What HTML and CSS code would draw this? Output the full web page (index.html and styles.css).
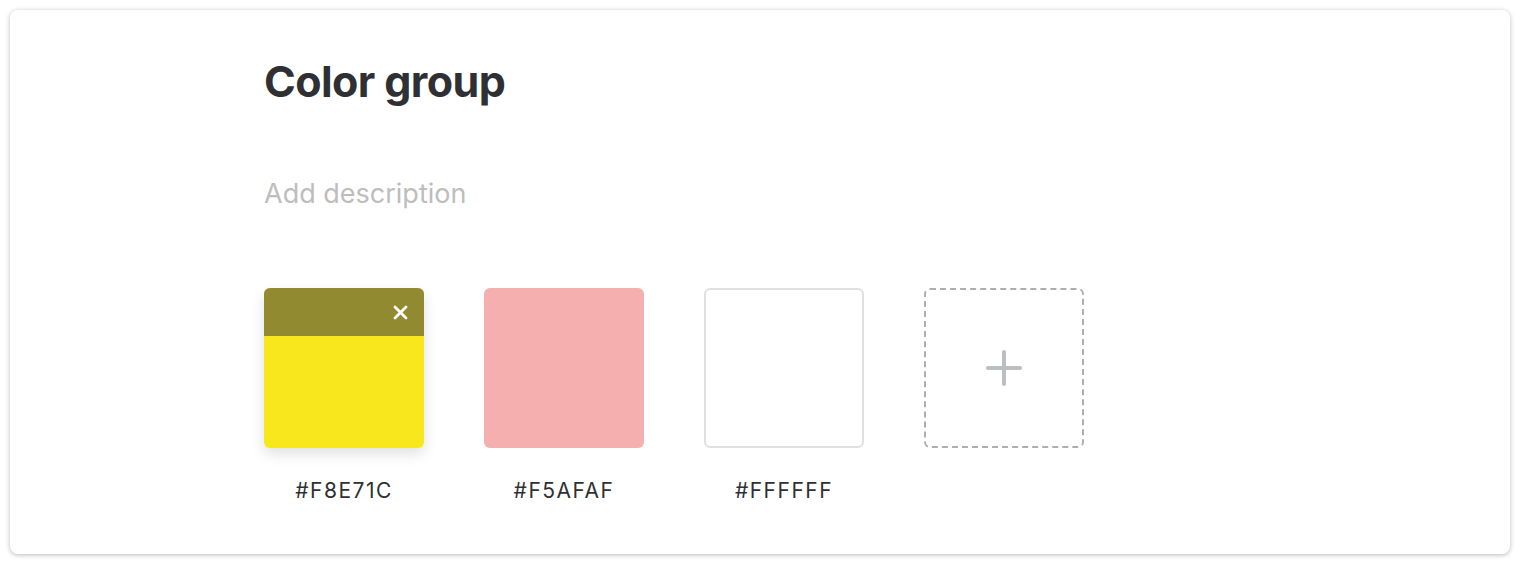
FILE: index.html
```
<!DOCTYPE html>
<html lang="en">
<head>
<meta charset="UTF-8" />
<meta name="viewport" content="width=device-width, initial-scale=1" />
<title>Color group</title>
<link rel="stylesheet" href="styles.css">
</head>
<body>
<div class="card">
  <h1 class="group-title">Color group</h1>
  <div class="group-desc">Add description</div>

  <div class="swatches">
    <div class="swatch">
      <div class="chip chip-active" style="background: #F8E71C;">
        <div class="chip-bar">
          <svg class="chip-close" width="15" height="15" viewBox="0 0 15 15">
            <path d="M2 2 L13 13 M13 2 L2 13" stroke="#fff" stroke-width="2.8" stroke-linecap="round" fill="none"/>
          </svg>
        </div>
      </div>
      <div class="swatch-label">#F8E71C</div>
    </div>
    <div class="swatch">
      <div class="chip" style="background: #F5AFAF;"></div>
      <div class="swatch-label">#F5AFAF</div>
    </div>
    <div class="swatch">
      <div class="chip chip-light" style="background: #FFFFFF;"></div>
      <div class="swatch-label">#FFFFFF</div>
    </div>
    <div class="swatch">
      <div class="chip chip-add">
        <svg width="36" height="36" viewBox="0 0 36 36">
          <path d="M18 2 V34 M2 18 H34" stroke="#bcbec2" stroke-width="4" stroke-linecap="round" fill="none"/>
        </svg>
      </div>
    </div>
  </div>
</div>
</body>
</html>
```

FILE: styles.css
```
body {
  font-family: Inter, 'Noto Sans', sans-serif;
  background: #fff;
  color: #2f3033;
  margin: 0;
  padding: 10px;
}
.card {
  height: 544px;
  box-sizing: border-box;
  background: #fff;
  border-radius: 8px;
  box-shadow: 0 1px 5px rgba(0, 0, 0, 0.28);
  padding: 47px 254px 0 254px;
}
.group-title {
  margin: 0;
  font-size: 43px;
  line-height: 48px;
  font-weight: 700;
  letter-spacing: -0.6px;
  color: #2f3033;
}
.group-desc {
  margin-top: 73px;
  font-size: 27px;
  line-height: 32px;
  color: #bdbdbd;
}
.swatches {
  display: flex;
  gap: 60px;
  margin-top: 78px;
}
.swatch {
  width: 160px;
  display: flex;
  flex-direction: column;
  align-items: center;
}
.chip {
  width: 160px;
  height: 160px;
  box-sizing: border-box;
  border-radius: 6px;
  overflow: hidden;
}
.chip-active {
  box-shadow: 0 6px 14px rgba(0, 0, 0, 0.12);
}
.chip-bar {
  height: 48px;
  background: #918a31;
  display: flex;
  justify-content: flex-end;
  align-items: center;
  padding-right: 16px;
}
.chip-light {
  border: 2px solid #e0e0e0;
}
.chip-add {
  border: 2px dashed #aeaeae;
  display: flex;
  align-items: center;
  justify-content: center;
}
.swatch-label {
  margin-top: 31px;
  font-size: 21px;
  line-height: 24px;
  letter-spacing: 1.5px;
  color: #2f3033;
}
```
